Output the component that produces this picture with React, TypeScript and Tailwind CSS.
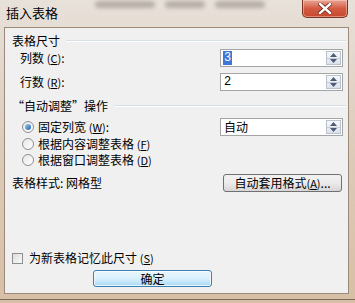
import React from "react";

const font = { fontFamily: '"Noto Sans CJK SC", "Liberation Sans", sans-serif' };

const Key = ({ k }: { k: string }) => (
  <span className="text-[11px]">
    (<span className="underline">{k}</span>)
  </span>
);

const SpinArrows = () => (
  <div className="flex h-full w-[15px] flex-col border border-[#b9c2cf] bg-gradient-to-b from-[#f7f8fa] to-[#dde2ea]">
    <div className="flex flex-1 items-center justify-center border-b border-[#c8ced8]">
      <svg width="7" height="4" viewBox="0 0 7 4">
        <path d="M0 4 L3.5 0 L7 4 Z" fill="#4d5a78" />
      </svg>
    </div>
    <div className="flex flex-1 items-center justify-center">
      <svg width="7" height="4" viewBox="0 0 7 4">
        <path d="M0 0 L3.5 4 L7 0 Z" fill="#4d5a78" />
      </svg>
    </div>
  </div>
);

const Spinner = ({ value, selected }: { value: string; selected?: boolean }) => (
  <div className="flex h-[18px] w-[123px] items-center justify-between border border-[#a5a5a5] bg-white pl-[2px] pr-[1px] py-[1px]">
    <span
      className={
        selected
          ? "bg-[#3d78d6] px-[1px] text-[12px] leading-[14px] text-white"
          : "px-[1px] text-[12px] leading-[14px] text-black"
      }
      style={{ fontFamily: '"Liberation Mono", monospace' }}
    >
      {value}
    </span>
    <SpinArrows />
  </div>
);

const Radio = ({ checked }: { checked?: boolean }) => (
  <div className="flex h-[12px] w-[12px] items-center justify-center rounded-full border border-[#8e8f8f] bg-gradient-to-br from-[#e6e6e6] to-[#ffffff]">
    {checked && <div className="h-[6px] w-[6px] rounded-full bg-gradient-to-br from-[#9ad0f5] to-[#1c5fa8]" />}
  </div>
);

const GroupHeader = ({ children }: { children: React.ReactNode }) => (
  <div className="mt-[5px] flex h-[16px] items-center pl-[7px] pr-[2px]">
    <span className="text-[12px] leading-[16px] text-black">{children}</span>
    <div className="ml-[6px] h-[2px] flex-1 border-t border-b border-t-[#d5dfe5] border-b-white" />
  </div>
);

export default function App() {
  return (
    <div
      className="flex h-[303px] w-[355px] flex-col overflow-hidden bg-gradient-to-b from-[#e8e1da] via-[#dccbb9] to-[#d8bfa6]"
      style={font}
    >
      {/* title bar */}
      <div className="flex h-[27px] items-start justify-between pl-[6px] pr-[7px]">
        <span className="mt-[5px] text-[13px] leading-[16px] text-black">插入表格</span>
        <div className="mt-[1px] flex flex-1 items-center justify-center gap-[10px] px-[30px] opacity-40 blur-[2px]">
          <div className="h-[7px] w-[60px] rounded bg-[#6b625a]" />
          <div className="h-[7px] w-[40px] rounded bg-[#6b625a]" />
          <div className="h-[7px] w-[50px] rounded bg-[#6b625a]" />
        </div>
        <div className="flex h-[18px] w-[46px] items-center justify-center rounded-b-[5px] border border-t-0 border-[#7a3426] bg-gradient-to-b from-[#e9a596] via-[#d35a42] to-[#c7472f] shadow-[inset_0_0_0_1px_rgba(255,220,210,0.45)]">
          <svg width="14" height="11" viewBox="0 0 14 11">
            <path d="M2 1 L12 10 M12 1 L2 10" stroke="#6b2a1f" strokeWidth="4" strokeLinecap="square" />
            <path d="M2 1 L12 10 M12 1 L2 10" stroke="#ffffff" strokeWidth="2.4" strokeLinecap="square" />
          </svg>
        </div>
      </div>

      {/* content panel */}
      <div className="ml-[4px] flex h-[267px] w-[345px] flex-col border border-[#9c8a78] bg-[#f0f0f0]">
        <GroupHeader>表格尺寸</GroupHeader>

        <div className="flex h-[18px] items-center justify-between pl-[15px] pr-[5px]">
          <span className="text-[12px] leading-[16px] text-black">
            列数 <Key k="C" />:
          </span>
          <Spinner value="3" selected />
        </div>

        <div className="mt-[6px] flex h-[18px] items-center justify-between pl-[15px] pr-[5px]">
          <span className="text-[12px] leading-[16px] text-black">
            行数 <Key k="R" />:
          </span>
          <Spinner value="2" />
        </div>

        <div className="mt-[2px]">
          <GroupHeader>“自动调整”操作</GroupHeader>
        </div>

        <div className="mt-[4px] flex h-[18px] items-center justify-between pl-[17px] pr-[5px]">
          <div className="flex items-center gap-[4px]">
            <Radio checked />
            <span className="text-[12px] leading-[16px] text-black">
              固定列宽 <Key k="W" />:
            </span>
          </div>
          <div className="flex h-[18px] w-[123px] items-center justify-between border border-[#a5a5a5] bg-white pl-[3px] pr-[1px] py-[1px]">
            <span className="text-[12px] leading-[14px] text-black">自动</span>
            <SpinArrows />
          </div>
        </div>

        <div className="flex h-[16px] items-center gap-[4px] pl-[17px]">
          <Radio />
          <span className="text-[12px] leading-[16px] text-black">
            根据内容调整表格 <Key k="F" />
          </span>
        </div>

        <div className="flex h-[16px] items-center gap-[4px] pl-[17px]">
          <Radio />
          <span className="text-[12px] leading-[16px] text-black">
            根据窗口调整表格 <Key k="D" />
          </span>
        </div>

        <div className="mt-[6px] flex h-[18px] items-center justify-between pl-[7px] pr-[6px]">
          <span className="text-[12px] leading-[16px] text-black">表格样式: 网格型</span>
          <button className="flex h-[18px] w-[119px] items-center justify-center rounded-[3px] border border-[#707070] bg-gradient-to-b from-[#f2f2f2] via-[#ebebeb] to-[#d6d6d6] text-[12px] leading-[16px] text-black">
            自动套用格式 <Key k="A" />...
          </button>
        </div>

        <div className="flex-1" />

        <div className="flex h-[16px] items-center gap-[6px] pl-[7px]">
          <div className="h-[11px] w-[11px] border border-[#8e8f8f] bg-gradient-to-br from-[#dcdcdc] to-[#fafafa]" />
          <span className="text-[12px] leading-[16px] text-black">
            为新表格记忆此尺寸 <Key k="S" />
          </span>
        </div>

        <div className="mb-[6px] mt-[4px] flex h-[17px] pl-[88px]">
          <button className="flex h-[17px] w-[119px] items-center justify-center rounded-[3px] border border-[#3c7fb1] bg-gradient-to-b from-[#eaf6fd] via-[#d9f0fc] to-[#a7d9f5] text-[12px] leading-[16px] text-black shadow-[inset_0_0_0_1px_rgba(255,255,255,0.7)]">
            确定
          </button>
        </div>
      </div>

      <div className="mt-[5px] h-[1px] w-full bg-[#7d6a58]" />
    </div>
  );
}
